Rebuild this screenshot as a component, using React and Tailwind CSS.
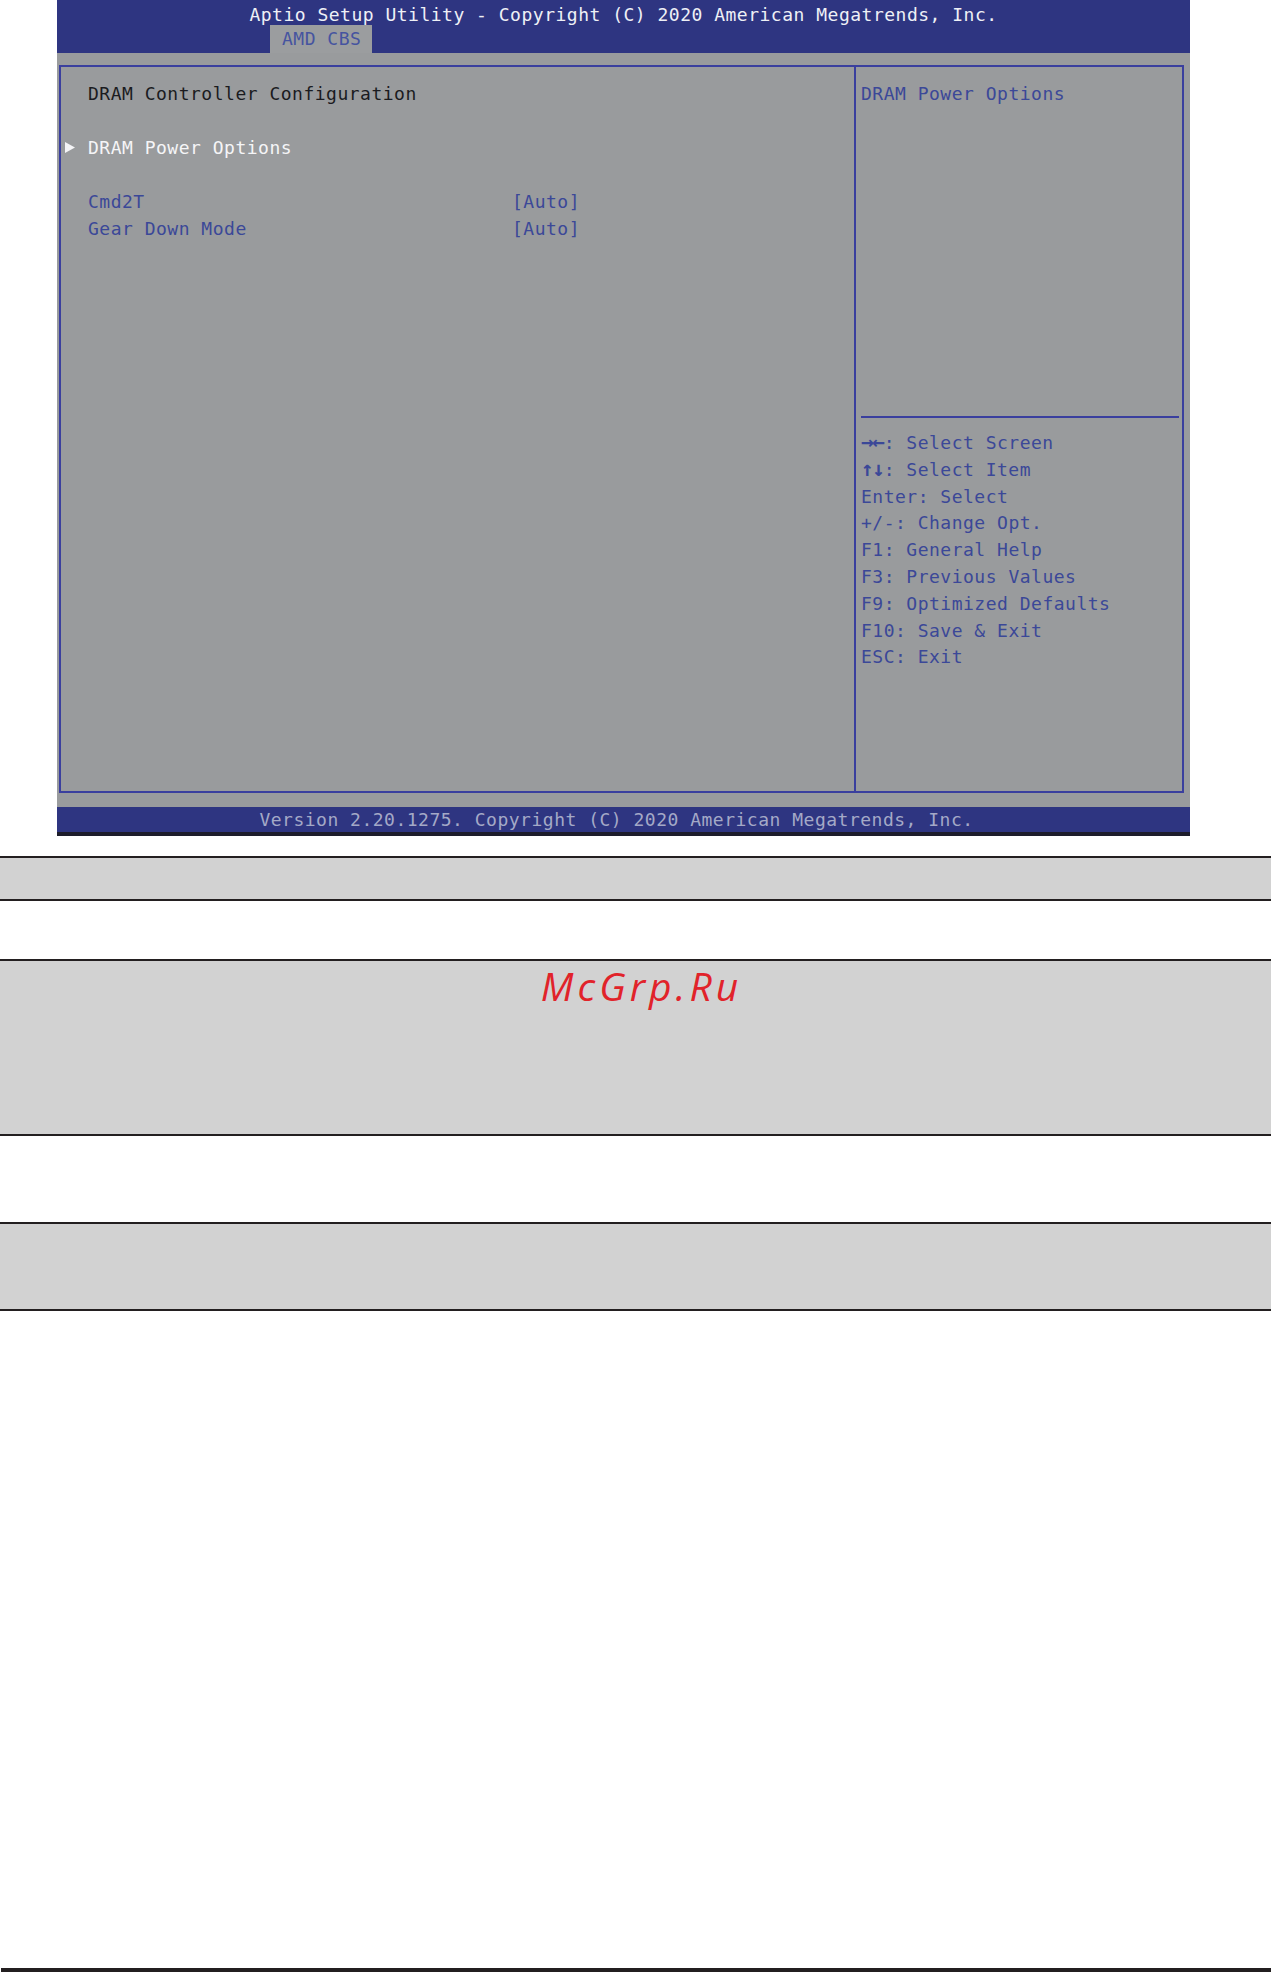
import React from "react";

const mono = "font-['DejaVu_Sans_Mono',monospace] text-[18px] tracking-[0.5px]";

// one bold arrow glyph kept inside a single character cell
function Arrow({ ch }) {
  return (
    <span className="inline-block w-[11.34px] text-center font-bold text-[21px] tracking-normal leading-none">
      {ch}
    </span>
  );
}

function HelpLine({ arrows, text }) {
  return (
    <div className="h-[26.8px] leading-[26.8px] whitespace-pre text-[#3b4898]">
      {arrows && arrows.map((a, i) => <Arrow key={i} ch={a} />)}
      {text}
    </div>
  );
}

function SetupScreen() {
  return (
    <div className={`ml-[57px] w-[1133px] h-[836px] bg-[#999b9d] flex flex-col ${mono}`}>
      {/* title bar with tab */}
      <div className="h-[53px] bg-[#2e3581] flex flex-col">
        <div className="h-[25px] pt-[2px] leading-[25px] text-center text-[#eef0f6] whitespace-pre">
          Aptio Setup Utility - Copyright (C) 2020 American Megatrends, Inc.
        </div>
        <div className="ml-[213px] w-[102px] h-[28px] bg-[#9b9d9f] pl-[12px] leading-[28px] text-[#4654a0]">
          AMD CBS
        </div>
      </div>

      {/* main frame */}
      <div className="flex-1 flex flex-col pt-[12px] pl-[2px] pr-[6px]">
        <div className="h-[728px] border-2 border-[#3a3f9e] flex">
          <div className="w-[793px] relative pt-[13px] pl-[27px]">
            <div className="h-[27px] leading-[27px] text-[#1b1b1f] whitespace-pre">
              DRAM Controller Configuration
            </div>
            <div className="h-[27px]" />
            <div className="h-[27px] leading-[27px] text-[#f5f5f7] whitespace-pre relative">
              <svg
                className="absolute left-[-23px] top-[8px]"
                width="10"
                height="11"
                viewBox="0 0 10 11"
              >
                <polygon points="0,0 10,5.5 0,11" fill="#f5f5f7" />
              </svg>
              DRAM Power Options
            </div>
            <div className="h-[27px]" />
            <div className="h-[27px] leading-[27px] flex text-[#3b4898] whitespace-pre">
              <div className="w-[424px]">Cmd2T</div>
              <div>[Auto]</div>
            </div>
            <div className="h-[27px] leading-[27px] flex text-[#3b4898] whitespace-pre">
              <div className="w-[424px]">Gear Down Mode</div>
              <div>[Auto]</div>
            </div>
          </div>
          <div className="w-[2px] bg-[#3a3f9e]" />
          <div className="flex-1 pt-[13px] pl-[5px] pr-[3px]">
            <div className="h-[27px] leading-[27px] text-[#3b4898] whitespace-pre">
              DRAM Power Options
            </div>
            <div className="mt-[309px] h-[2px] bg-[#3a3f9e]" />
            <div className="mt-[12px]">
              <HelpLine arrows={["→", "←"]} text=": Select Screen" />
              <HelpLine arrows={["↑", "↓"]} text=": Select Item" />
              <HelpLine text="Enter: Select" />
              <HelpLine text="+/-: Change Opt." />
              <HelpLine text="F1: General Help" />
              <HelpLine text="F3: Previous Values" />
              <HelpLine text="F9: Optimized Defaults" />
              <HelpLine text="F10: Save & Exit" />
              <HelpLine text="ESC: Exit" />
            </div>
          </div>
        </div>
        <div className="h-[14px]" />
      </div>

      {/* footer */}
      <div className="h-[25px] bg-[#2e3581] pr-[14px] leading-[25px] text-center text-[#a4a9c7] whitespace-pre">
        Version 2.20.1275. Copyright (C) 2020 American Megatrends, Inc.
      </div>
      <div className="h-[4px] bg-[#1d1d2b]" />
    </div>
  );
}

export default function App() {
  return (
    <div className="w-[1271px] h-[1972px] bg-white flex flex-col overflow-hidden">
      <SetupScreen />

      <div className="mt-[20px] h-[45px] bg-[#d2d2d2] border-y-2 border-[#231f20]" />

      <div className="mt-[58px] h-[177px] bg-[#d2d2d2] border-y-2 border-[#231f20] flex justify-center">
        <div className="mt-[5px] ml-[12px] h-[39px] leading-[39px] font-['Open_Sans',sans-serif] italic text-[39px] tracking-[4px] text-[#e1232a]">
          McGrp.Ru
        </div>
      </div>

      <div className="mt-[86px] h-[89px] bg-[#d2d2d2] border-y-2 border-[#231f20]" />

      <div className="mt-auto h-[4px] ml-[1px] bg-[#231f20]" />
    </div>
  );
}
